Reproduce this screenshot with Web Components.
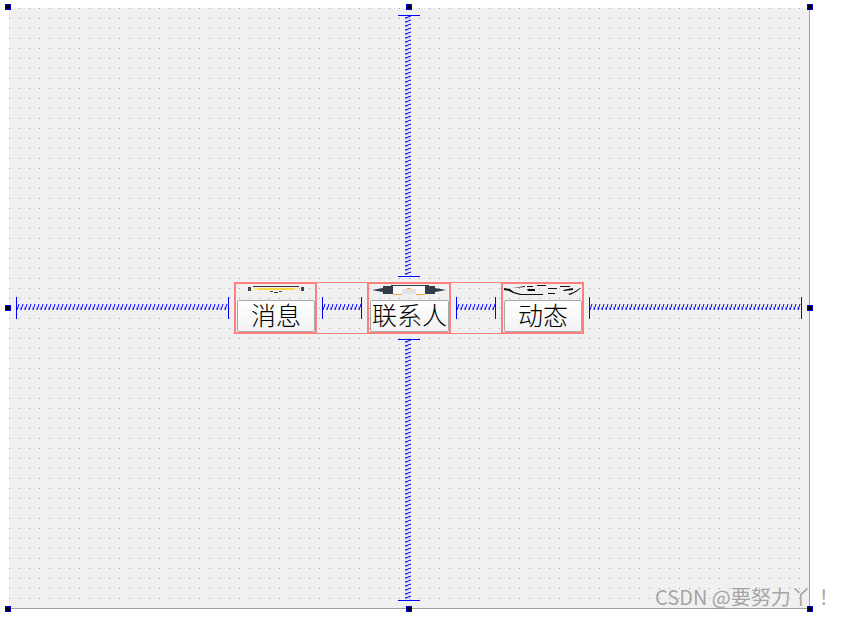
<!DOCTYPE html>
<html>
<head>
<meta charset="utf-8">
<style>
    html, body { margin: 0; background: #fff; }
    body { width: 843px; height: 617px; overflow: hidden; position: relative; font-family: "Noto Sans CJK SC", sans-serif; }
</style>
</head>
<body>
<design-form>
    <qt-spacer slot="top" dir="v"></qt-spacer>
    <qt-spacer slot="left" dir="h"></qt-spacer>
    <tool-row slot="middle">
        <tool-button label="消息" icon="mail"></tool-button>
        <qt-spacer dir="h" small style="margin: 0 5px; align-self: center"></qt-spacer>
        <tool-button label="联系人" icon="penguin" style="width: 84px"></tool-button>
        <qt-spacer dir="h" small style="margin: 0 5px; align-self: center"></qt-spacer>
        <tool-button label="动态" icon="star"></tool-button>
    </tool-row>
    <qt-spacer slot="right" dir="h"></qt-spacer>
    <qt-spacer slot="bottom" dir="v"></qt-spacer>
</design-form>
<water-mark>CSDN @要努力丫<span style="margin-left: 8px">！</span></water-mark>

<script>
// designer canvas with the dot grid and selection handles
class DesignForm extends HTMLElement {
    constructor() {
        super();
        const handles = [[5, 4], [406, 4], [807, 4], [5, 305], [807, 305], [5, 606], [406, 606], [807, 606]]
            .map(p => `<i style="left:${p[0]}px;top:${p[1]}px"></i>`).join('');
        this.attachShadow({ mode: 'open' }).innerHTML = `
            <style>
                :host { display: block; width: 843px; height: 617px; position: relative; }
                .form {
                    position: absolute; left: 9px; top: 8px;
                    width: 801px; height: 601px;
                    box-sizing: border-box;
                    border-right: 1px solid #a0a0a0;
                    border-bottom: 1px solid #a0a0a0;
                    background-color: #f0f0f0;
                    background-image: url("data:image/svg+xml,%3Csvg xmlns='http://www.w3.org/2000/svg' width='10' height='10'%3E%3Crect width='1' height='1' fill='%23a0a0a0'/%3E%3C/svg%3E");
                    display: grid;
                    grid-template-columns: 225px 350px 1fr;
                    grid-template-rows: 274px 52px 1fr;
                }
                .top, .bottom { grid-column: 1 / 4; display: flex; justify-content: center; align-items: flex-start; }
                .top { padding-top: 7px; }
                .bottom { padding-top: 5px; }
                .left { display: flex; align-items: center; padding-left: 7px; }
                .right { display: flex; align-items: center; padding-left: 5px; }
                i {
                    position: absolute; width: 6px; height: 6px; box-sizing: border-box;
                    background: #000; border: 1px solid #0000e0;
                }
            </style>
            <div class="form">
                <div class="top"><slot name="top"></slot></div>
                <div class="left"><slot name="left"></slot></div>
                <slot name="middle"></slot>
                <div class="right"><slot name="right"></slot></div>
                <div class="bottom"><slot name="bottom"></slot></div>
            </div>
            ${handles}
        `;
    }
}

// blue spring, horizontal or vertical
class QtSpacer extends HTMLElement {
    constructor() {
        super();
        const vertical = this.getAttribute('dir') === 'v';
        const id = vertical ? 'sv' : 'sh';
        let w = 213, h = 22;
        if (vertical) { w = 22; h = 262; }
        if (this.hasAttribute('small')) { w = 40; }
        const spring = vertical
            ? `<pattern id="${id}" width="6" height="4" patternUnits="userSpaceOnUse" x="7" y="0">
                   <path d="M0 3 L6 1" stroke="#0000ff" stroke-width="1" fill="none"/>
                   <path d="M0 3 L6 5" stroke="#0000ff" stroke-width=".4" fill="none"/>
               </pattern>
               <rect x="7" y="1" width="6" height="${h - 2}" fill="url(#${id})"/>
               <rect x="0" y="0" width="22" height="1" fill="#0000ff"/>
               <rect x="0" y="${h - 1}" width="22" height="1" fill="#0000ff"/>`
            : `<pattern id="${id}" width="4" height="6" patternUnits="userSpaceOnUse" x="0" y="7">
                   <path d="M1 6 L3 0" stroke="#0000ff" stroke-width="1" fill="none"/>
                   <path d="M-1 0 L1 6" stroke="#0000ff" stroke-width=".4" fill="none"/>
               </pattern>
               <rect x="1" y="7" width="${w - 2}" height="6" fill="url(#${id})"/>
               <rect x="0" y="0" width="1" height="22" fill="#0000ff"/>
               <rect x="${w - 1}" y="0" width="1" height="22" fill="#0000ff"/>`;
        this.attachShadow({ mode: 'open' }).innerHTML = `
            <style>:host { display: block; flex: none; line-height: 0; } svg { display: block; }</style>
            <svg width="${w}" height="${h}" viewBox="0 0 ${w} ${h}">${spring}</svg>
        `;
    }
}

// the horizontal layout, thin red outline
class ToolRow extends HTMLElement {
    constructor() {
        super();
        this.attachShadow({ mode: 'open' }).innerHTML = `
            <style>
                :host {
                    display: flex; align-items: stretch;
                    width: 350px; height: 52px;
                    box-shadow: inset 0 1px #ff8080, inset 0 -1px #ff8080;
                }
            </style>
            <slot></slot>
        `;
    }
}

const ICONS = {
    mail: `<rect x="11" y="2" width="3" height="4" fill="#444"/><rect x="64" y="2" width="3" height="4" fill="#444"/>
           <rect x="16" y="1" width="46" height="1" fill="#333"/>
           <rect x="17" y="3" width="44" height="2" fill="#fbe88a"/><rect x="21" y="3" width="36" height="2" fill="#f8d840"/>
           <rect x="33" y="6" width="3" height="1" fill="#444"/><rect x="42" y="6" width="3" height="1" fill="#555"/>
           <rect x="37" y="7" width="4" height="1" fill="#333"/>`,
    penguin: `<path d="M2 5 L13 3 L13 7 L7 6Z" fill="#333d4a"/>
              <path d="M76 5 L65 3 L65 7 L71 6Z" fill="#333d4a"/>
              <rect x="13" y="1" width="10" height="8" fill="#333d4a"/><rect x="55" y="1" width="10" height="8" fill="#333d4a"/>
              <rect x="21" y="0" width="38" height="1" fill="#333d4a"/>
              <rect x="23" y="1" width="32" height="8" fill="#fafafa"/>
              <rect x="32" y="4" width="14" height="5" fill="#e2e2e2"/>
              <rect x="37" y="3" width="4" height="1" fill="#f0a020"/>
              <rect x="23" y="9" width="9" height="1" fill="#f0b040"/><rect x="46" y="9" width="9" height="1" fill="#f0b040"/>`,
    star: `<path d="M0 3 L6 4 L10 7 L17 9 L39 9 L39 10 L16 10 L9 8 L5 6 L0 5Z" fill="#111"/>
           <path d="M76 3 L70 7 L64 9 L66 10 L72 7 L77 3Z" fill="#111"/>
           <path d="M59 5 L69 3 L69 5 L60 6Z" fill="#111"/>
           <path d="M23 4 L31 4 L31 6 L24 6Z" fill="#111"/>
           <path d="M9 3 L21 1 L21 2 L10 3Z M23 1 H29 V2 H23Z M33 0 H42 V1 H33Z M56 1 H66 V2 H56Z M44 3 H53 V4 H44Z M44 8 H51 V9 H44Z" fill="#111"/>`
};

// icon squeezed on top, button with label below
class ToolButton extends HTMLElement {
    constructor() {
        super();
        const label = this.getAttribute('label');
        const icon = ICONS[this.getAttribute('icon')];
        this.attachShadow({ mode: 'open' }).innerHTML = `
            <style>
                :host {
                    display: flex; flex-direction: column; flex: none;
                    box-sizing: border-box;
                    width: 83px;
                    border: 2px solid #ff7f7f;
                    padding-left: 1px;
                }
                svg { display: block; flex: none; }
                .btn {
                    flex: 1;
                    display: flex; align-items: center; justify-content: center;
                    box-sizing: border-box;
                    padding-bottom: 3px;
                    border: 1px solid #a8a8a8; border-radius: 2px;
                    background: linear-gradient(#ffffff, #f2f2f2);
                    font: 300 25px/1 "Noto Sans CJK SC", sans-serif;
                    color: #000;
                    white-space: nowrap;
                }
            </style>
            <svg width="78" height="16" viewBox="0 -1 78 16">${icon}</svg>
            <div class="btn">${label}</div>
        `;
    }
}

// the site's stamp over the corner
class WaterMark extends HTMLElement {
    constructor() {
        super();
        this.attachShadow({ mode: 'open' }).innerHTML = `
            <style>
                :host {
                    position: absolute; left: 655px; top: 584px;
                    font: 400 20px/26px "Noto Sans CJK SC", sans-serif;
                    color: rgba(130,130,130,.7);
                    white-space: nowrap;
                }
            </style>
            <slot></slot>
        `;
    }
}

customElements.define('design-form', DesignForm);
customElements.define('qt-spacer', QtSpacer);
customElements.define('tool-row', ToolRow);
customElements.define('tool-button', ToolButton);
customElements.define('water-mark', WaterMark);
</script>
</body>
</html>
